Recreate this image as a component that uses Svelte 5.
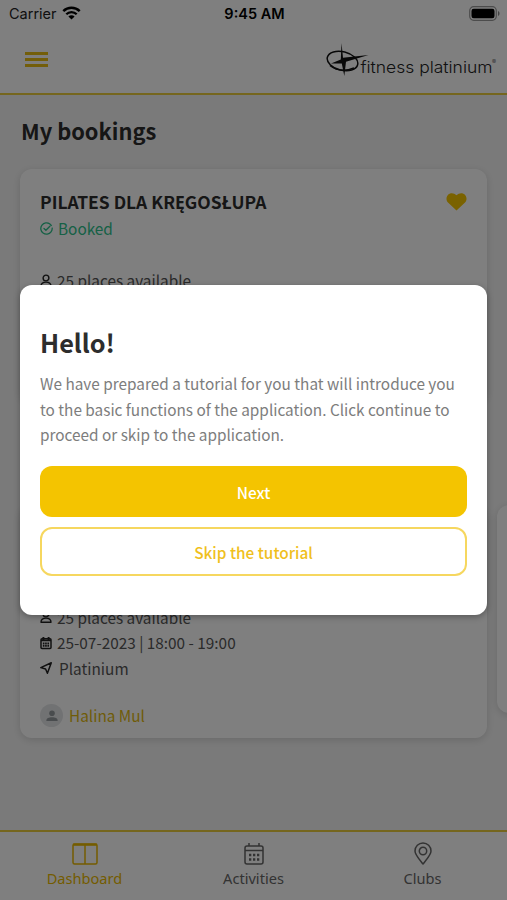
<script lang="ts">
	type Icon = 'person' | 'calendar' | 'location';
	type Booking = {
		title?: string;
		status?: string;
		rows: { icon: Icon; text: string }[];
		trainer?: string;
	};

	const places = { icon: 'person' as Icon, text: '25 places available' };

	const first: Booking = {
		title: 'PILATES DLA KRĘGOSŁUPA',
		status: 'Booked',
		rows: [places]
	};

	const second: Booking = {
		rows: [
			places,
			{ icon: 'calendar', text: '25-07-2023 | 18:00 - 19:00' },
			{ icon: 'location', text: 'Platinium' }
		],
		trainer: 'Halina Mul'
	};

	const tabs = [
		{ id: 'dashboard', label: 'Dashboard' },
		{ id: 'activities', label: 'Activities' },
		{ id: 'clubs', label: 'Clubs' }
	];

	let active = $state('dashboard');
	let tutorialOpen = $state(true);

	function closeTutorial() {
		tutorialOpen = false;
	}
</script>

{#snippet rowIcon(name: Icon)}
	<svg class="row-icon" width="12" height="14" viewBox="0 0 12 14" fill="none" aria-hidden="true">
		{#if name === 'person'}
			<circle cx="6" cy="4" r="2.9" stroke="currentColor" stroke-width="1.4" />
			<path d="M1 12.3c0-2.7 1.8-4.2 5-4.2s5 1.5 5 4.2z" stroke="currentColor" stroke-width="1.4" stroke-linejoin="round" />
		{:else if name === 'calendar'}
			<rect x="1" y="2.8" width="10" height="9.7" rx="1" stroke="currentColor" stroke-width="1.5" />
			<path d="M1 4.4h10M3.4 1v3M8.600 1v3" stroke="currentColor" stroke-width="1.9" />
			<path d="M2.800 7.500h6.400M2.800 9.900h6.400" stroke="currentColor" stroke-width="1.8" stroke-dasharray="1.7 .6" />
		{:else}
			<path d="M11.300 1.800 7.400 12.200 5.600 8 .8 6.600z" stroke="currentColor" stroke-width="1.5" stroke-linejoin="round" />
		{/if}
	</svg>
{/snippet}

{#snippet card(booking: Booking)}
	<article class="card">
		{#if booking.title}
			<div class="card-head">
				<h2>{booking.title}</h2>
				<svg class="heart" width="21" height="18" viewBox="0 0 22 19" aria-hidden="true">
					<path d="M11 18.5 2 10C-.2 7.6 0 4 2 2c2.500-2.500 6.500-2 9 .5C13.500 0 17.500-.5 20 2c2 2 2.200 5.600 0 8z" fill="currentColor" />
				</svg>
			</div>
		{/if}
		{#if booking.status}
			<div class="status">
				<svg width="13" height="13" viewBox="0 0 13 13" fill="none" aria-hidden="true">
					<circle cx="6.5" cy="6.5" r="5.7" stroke="currentColor" stroke-width="1.3" stroke-dasharray="33 2.8" transform="rotate(-8 6.5 6.5)" />
					<path d="M4 6.5 5.900 8.300 9.900 4.300" stroke="currentColor" stroke-width="1.3" stroke-linecap="round" />
				</svg>
				{booking.status}
			</div>
		{/if}
		<div class="rows">
			{#each booking.rows as row}
				<div class="row" class:wide={row.icon === 'location'}>
					{@render rowIcon(row.icon)}
					<span>{row.text}</span>
				</div>
			{/each}
		</div>
		{#if booking.trainer}
			<div class="trainer">
				<span class="avatar">
					<svg width="12" height="12" viewBox="0 0 12 12" aria-hidden="true">
						<circle cx="6" cy="3.2" r="2.8" fill="currentColor" />
						<path d="M.3 11c0-3 2.5-3.700 5.700-3.700s5.700.7 5.700 3.700z" fill="currentColor" />
					</svg>
				</span>
				{booking.trainer}
			</div>
		{/if}
	</article>
{/snippet}

<div class="screen">
	<div class="status-bar">
		<div class="carrier">
			Carrier
			<svg width="19" height="14" viewBox="0 0 19 14" fill="none" aria-hidden="true">
				<path d="M1.300 5.100a11.700 11.700 0 0 1 16.400 0" stroke="currentColor" stroke-width="2.5" />
				<path d="M4.300 8.300a7.300 7.300 0 0 1 10.400 0" stroke="currentColor" stroke-width="2.3" />
				<path d="M9.500 13.600 6.400 10.500a4.400 4.400 0 0 1 6.200 0z" fill="currentColor" />
			</svg>
		</div>
		<div class="clock">9:45 AM</div>
		<svg class="battery" width="31" height="15" viewBox="0 0 31 15" fill="none" aria-hidden="true">
			<rect x=".7" y=".7" width="26.600" height="13.600" rx="4" stroke="#999" stroke-width="1.2" />
			<rect x="2.500" y="2.700" width="23" height="9.600" rx="2.200" fill="#000" />
			<path d="M29 5c2 .8 2 4.200 0 5z" fill="#888" />
		</svg>
	</div>

	<header class="header">
		<button class="menu" aria-label="Menu"><span></span><span></span><span></span></button>
		<svg class="logo" width="172" height="36" viewBox="0 0 172 36" aria-hidden="true">
			<ellipse cx="16.500" cy="18" rx="15.600" ry="9.300" transform="rotate(14 16.500 18)" fill="none" stroke="#111" stroke-width="1.5" />
			<path d="M4 22.500q10 8 24 2.500" fill="none" stroke="#111" stroke-width="1.6" />
			<path d="M15.500 0 17 14.800 42.500 12 20 18.800 18.300 33 15.800 20.500 5 20.500 14.800 16.500z" fill="#111" />
			<text x="34.500" y="30" textLength="132" lengthAdjust="spacingAndGlyphs">fitness platinium</text>
			<text class="reg" x="166" y="21">®</text>
		</svg>
	</header>

	<main>
		<h1>My bookings</h1>
		{@render card(first)}
		<div class="slider">
			{@render card(second)}
			<div class="card next-card"></div>
		</div>
	</main>

	<nav class="tabs">
		{#each tabs as tab}
			<button class="tab" class:active={active === tab.id} onclick={() => (active = tab.id)}>
				<svg width="26" height="24" viewBox="0 0 26 24" fill="none" stroke="currentColor" stroke-width="1.5" aria-hidden="true">
					{#if tab.id === 'dashboard'}
						<rect x="1" y="2" width="24" height="20" rx="1.5" />
						<path d="M1 2.700h24" stroke-width="2.2" />
						<path d="M13 2v20" />
					{:else if tab.id === 'activities'}
						<rect x="4" y="4" width="18" height="18" rx="2" />
						<path d="M4 8.500h18M8 1v3M18 1v3" />
						<path d="M8 13h10.500M8 17.500h10.500" stroke-width="2.3" stroke-dasharray="2.3 1.7" />
					{:else}
						<path d="M13 22C10 18 5 13 5 9a8 8 0 0 1 16 0c0 4-5 9-8 13z" stroke-linejoin="round" />
						<circle cx="13" cy="9" r="3.7" />
					{/if}
				</svg>
				{tab.label}
			</button>
		{/each}
	</nav>

	{#if tutorialOpen}
		<div class="backdrop">
			<div class="dialog" role="dialog" aria-modal="true" aria-labelledby="tutorial-title">
				<h2 id="tutorial-title">Hello!</h2>
				<p>
					We have prepared a tutorial for you that will introduce you to the basic functions of the
					application. Click continue to proceed or skip to the application.
				</p>
				<button class="btn btn-primary" onclick={closeTutorial}>Next</button>
				<button class="btn btn-outline" onclick={closeTutorial}>Skip the tutorial</button>
			</div>
		</div>
	{/if}
</div>

<style>
	:global(body) {
		margin: 0;
	}

	.screen {
		--yellow: #f4c400;
		--ink: #2d2d2d;
		position: relative;
		display: flex;
		flex-direction: column;
		height: 900px;
		overflow: hidden;
		background: #f5f5f5;
		color: #555;
		font-family: 'Noto Sans CJK SC', 'Noto Sans', sans-serif;
		font-size: 15.35px;
	}

	h1,
	h2,
	p {
		margin: 0;
	}

	button {
		font-family: inherit;
		cursor: pointer;
	}

	/* Status bar */
	.status-bar {
		display: grid;
		grid-template-columns: 1fr auto 1fr;
		align-items: center;
		height: 28px;
		padding: 0 7px 0 9px;
		box-sizing: border-box;
		background: #fff;
		color: #000;
		font-family: Inter, sans-serif;
		font-size: 14.5px;
	}

	.carrier {
		display: flex;
		align-items: center;
		gap: 5px;
		margin-top: -1px;
		color: #222;
	}

	.carrier svg {
		color: #000;
		margin-top: -2px;
	}

	.clock {
		margin-top: -1px;
		font-weight: 600;
	}

	.battery {
		justify-self: end;
		margin-top: -2px;
	}

	/* Header */
	.header {
		display: flex;
		align-items: center;
		justify-content: space-between;
		height: 67px;
		padding: 0 9px 0 25px;
		box-sizing: border-box;
		background: #fff;
		border-bottom: 2px solid #ebcd3c;
	}

	.menu {
		display: flex;
		flex-direction: column;
		gap: 3.5px;
		margin-top: -2px;
		padding: 0;
		border: 0;
		background: none;
	}

	.menu span {
		width: 23px;
		height: 2.6px;
		background: #e6bc14;
	}

	.logo text {
		font-family: Inter, sans-serif;
		font-weight: 300;
		font-size: 16.5px;
		fill: #222;
	}

	.logo .reg {
		font-size: 6px;
	}

	/* Bookings */
	main {
		flex: 1;
		padding: 0 20px;
	}

	h1 {
		margin: 18px 0 21px 1px;
		font-size: 21.85px;
		line-height: 35px;
		color: var(--ink);
	}

	.card {
		display: flex;
		flex-direction: column;
		flex-shrink: 0;
		width: 467px;
		height: 233px;
		padding: 19px 20px 10px;
		box-sizing: border-box;
		border-radius: 12px;
		background: #fff;
		box-shadow: 0 2px 8px rgba(0, 0, 0, 0.14);
	}

	.card-head {
		display: flex;
		align-items: center;
		justify-content: space-between;
	}

	.card h2 {
		font-size: 17.45px;
		line-height: 28px;
		color: var(--ink);
	}

	.heart {
		color: var(--yellow);
	}

	.status {
		display: flex;
		align-items: center;
		gap: 5px;
		line-height: 25px;
		color: #2dc28c;
	}

	.rows {
		margin-top: 27px;
	}

	.row {
		display: flex;
		align-items: center;
		gap: 5px;
		line-height: 25.5px;
	}

	.row.wide {
		gap: 7px;
	}

	.row-icon {
		color: #222;
	}

	.slider {
		display: flex;
		gap: 10px;
		margin-top: 103px;
	}

	.slider .rows {
		margin-top: auto;
	}

	.next-card {
		height: 208px;
	}

	.trainer {
		display: flex;
		align-items: center;
		gap: 6px;
		margin-top: 22px;
		line-height: 25px;
		color: #e0b810;
	}

	.avatar {
		display: grid;
		place-items: center;
		width: 23px;
		height: 23px;
		border-radius: 50%;
		background: #e3e5e7;
		color: #93999c;
	}

	/* Tab bar */
	.tabs {
		display: grid;
		grid-template-columns: repeat(3, 1fr);
		height: 70px;
		box-sizing: border-box;
		background: #fff;
		border-top: 2px solid #ebcd3c;
	}

	.tab {
		display: flex;
		flex-direction: column;
		align-items: center;
		padding: 10px 0 0;
		border: 0;
		background: none;
		color: #666;
		font-family: 'Noto Sans', sans-serif;
		font-size: 14.6px;
		line-height: 24px;
	}

	.tab.active {
		color: #e9b800;
	}

	/* Tutorial dialog */
	.backdrop {
		position: absolute;
		inset: 0;
		display: flex;
		align-items: center;
		justify-content: center;
		background: rgba(0, 0, 0, 0.5);
	}

	.dialog {
		width: 467px;
		height: 330px;
		padding: 39px 20px;
		box-sizing: border-box;
		border-radius: 12px;
		background: #fff;
		box-shadow: 0 2px 6px rgba(0, 0, 0, 0.3);
	}

	.dialog h2 {
		font-size: 25.3px;
		line-height: 37px;
		color: var(--ink);
	}

	.dialog p {
		margin: 10px 0 18.5px;
		line-height: 25.6px;
		color: #7d7d7d;
	}

	.btn {
		display: block;
		width: 100%;
		box-sizing: border-box;
		border: 0;
		border-radius: 12px;
		font-size: 15.4px;
		font-weight: 500;
	}

	.btn-primary {
		height: 51px;
		margin-bottom: 10px;
		background: var(--yellow);
		color: #fff;
	}

	.btn-outline {
		height: 49px;
		border: 2px solid #f6d75f;
		background: #fff;
		color: #f0c01c;
	}
</style>
